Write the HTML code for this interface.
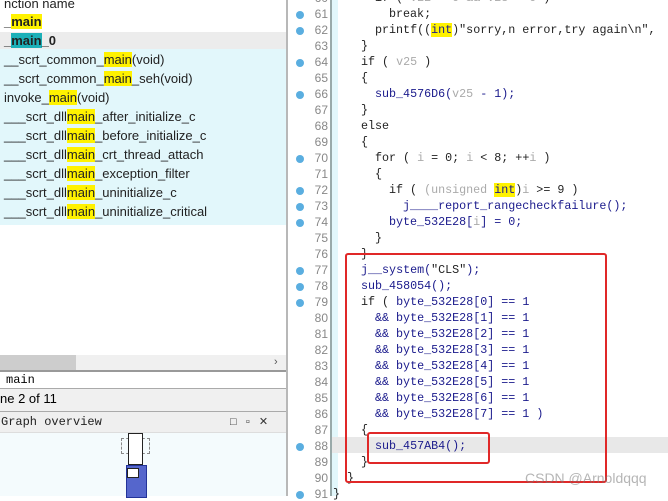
<!DOCTYPE html>
<html><head><style>
body{margin:0;width:668px;height:496px;overflow:hidden;background:#fff;position:relative;font-family:"Liberation Sans",sans-serif}
.l{position:absolute;left:0;top:0;width:286px;height:496px;background:#fff}
.row{position:absolute;left:4px;font-size:13px;color:#222;height:19px;line-height:19px;white-space:pre}
.h{background:#fff200}
.hc{background:#1cb0b8}
.code{position:absolute;left:0;top:0;font-family:"Liberation Mono",monospace;font-size:11.7px}
.ln{position:absolute;left:306px;width:22px;text-align:right;color:#888;font-size:12px;font-family:"Liberation Sans",sans-serif}
.dot{position:absolute;left:296px;width:8px;height:8px;border-radius:50%;background:#5aaee0}
.c{position:absolute;white-space:pre;color:#1a1a8c}
.k{color:#222}
.g{color:#aaa}
.y{background:#fff200}
</style></head><body>
<div class="l">
<div class="row" style="top:-6px">nction name</div>
<div style="position:absolute;left:0;top:32px;width:286px;height:17px;background:#ececec"></div>
<div style="position:absolute;left:0;top:49px;width:286px;height:176px;background:#e2f7fb"></div>
<div class="row" style="top:12px;font-weight:bold">_<span class="h">main</span></div>
<div class="row" style="top:31px;font-weight:bold">_<span class="hc">main</span>_0</div>
<div class="row" style="top:50px">__scrt_common_<span class="h">main</span>(void)</div>
<div class="row" style="top:69px">__scrt_common_<span class="h">main</span>_seh(void)</div>
<div class="row" style="top:88px">invoke_<span class="h">main</span>(void)</div>
<div class="row" style="top:107px">___scrt_dll<span class="h">main</span>_after_initialize_c</div>
<div class="row" style="top:126px">___scrt_dll<span class="h">main</span>_before_initialize_c</div>
<div class="row" style="top:145px">___scrt_dll<span class="h">main</span>_crt_thread_attach</div>
<div class="row" style="top:164px">___scrt_dll<span class="h">main</span>_exception_filter</div>
<div class="row" style="top:183px">___scrt_dll<span class="h">main</span>_uninitialize_c</div>
<div class="row" style="top:202px">___scrt_dll<span class="h">main</span>_uninitialize_critical</div>
<div style="position:absolute;left:0;top:355px;width:286px;height:15px;background:#f0f0f0"></div>
<div style="position:absolute;left:0;top:355px;width:76px;height:15px;background:#cdcdcd"></div>
<div style="position:absolute;left:274px;top:356px;font-size:11px;color:#555">›</div>
<div style="position:absolute;left:0;top:370px;width:286px;height:2px;background:#999"></div>
<div style="position:absolute;left:6px;top:373px;font-family:'Liberation Mono',monospace;font-size:12px">main</div>
<div style="position:absolute;left:0;top:388px;width:286px;height:22px;background:#f0f0f0;border-top:1px solid #aaa;border-bottom:1px solid #aaa"></div>
<div style="position:absolute;left:0;top:391px;font-size:13px">ne 2 of 11</div>
<div style="position:absolute;left:0;top:412px;width:286px;height:20px;background:#efefef;border-bottom:1px solid #ddd"></div>
<div style="position:absolute;left:1px;top:415px;font-family:'Liberation Mono',monospace;font-size:12px;color:#222">Graph overview</div>
<div style="position:absolute;left:230px;top:415px;font-size:11px;color:#333">□ &nbsp;&nbsp;▫ &nbsp;&nbsp;✕</div>
<div style="position:absolute;left:0;top:433px;width:286px;height:63px;background:#f4fbfd"></div>
<div style="position:absolute;left:121px;top:438px;width:27px;height:14px;border:1px dashed #888"></div>
<div style="position:absolute;left:128px;top:433px;width:13px;height:30px;border:1px solid #222;background:#fff"></div>
<div style="position:absolute;left:126px;top:465px;width:19px;height:31px;border:1px solid #223399;background:#5566cc"></div>
<div style="position:absolute;left:127px;top:468px;width:10px;height:8px;background:#fff;border:1px solid #222"></div>
</div>
<div style="position:absolute;left:286px;top:0;width:2px;height:496px;background:#b8b8b8"></div>
<div style="position:absolute;left:330px;top:0;width:2px;height:496px;background:#9aa"></div>
<div style="position:absolute;left:332px;top:0;width:6px;height:496px;background:#e2f7fb"></div>
<div style="position:absolute;left:332px;top:437px;width:336px;height:16px;background:#e8e8e8"></div>
<div class="code" id="code"></div>
<div style="position:absolute;left:345px;top:253px;width:258px;height:226px;border:2.5px solid #e02828;border-radius:3px"></div>
<div style="position:absolute;left:367px;top:432px;width:119px;height:28px;border:2.5px solid #e02828;border-radius:3px"></div>
<div style="position:absolute;left:525px;top:470px;font-size:14px;color:rgba(120,120,120,0.55)">CSDN @Arnoldqqq</div>
<script>
var L=[[60,0,'<span class="k">if ( </span><span class="g">v22 = 0 &amp;&amp; v23 = 0</span><span class="k"> )</span>',4],
[61,1,'<span class="k">break;</span>',6],[62,1,'<span class="k">printf((</span><span class="y">int</span><span class="k">)"sorry,n error,try again\\n",</span>',4],
[63,0,'<span class="k">}</span>',2],[64,1,'<span class="k">if ( </span><span class="g">v25</span><span class="k"> )</span>',2],[65,0,'<span class="k">{</span>',2],
[66,1,'sub_4576D6(<span class="g">v25</span> - 1);',4],[67,0,'<span class="k">}</span>',2],[68,0,'<span class="k">else</span>',2],[69,0,'<span class="k">{</span>',2],
[70,1,'<span class="k">for ( </span><span class="g">i</span><span class="k"> = 0; </span><span class="g">i</span><span class="k"> &lt; 8; ++</span><span class="g">i</span><span class="k"> )</span>',4],
[71,0,'<span class="k">{</span>',4],[72,1,'<span class="k">if ( </span><span class="g">(unsigned </span><span class="y">int</span><span class="k">)</span><span class="g">i</span><span class="k"> &gt;= 9 )</span>',6],
[73,1,'j____report_rangecheckfailure();',8],[74,1,'byte_532E28[<span class="g">i</span>] = 0;',6],[75,0,'<span class="k">}</span>',4],
[76,0,'<span class="k">}</span>',2],[77,1,'j__system(<span class="k">"CLS"</span>);',2],[78,1,'sub_458054();',2],[79,1,'<span class="k">if ( </span>byte_532E28[0] == 1',2]];
for(var i=1;i<8;i++)L.push([79+i,0,'&amp;&amp; byte_532E28['+i+'] == 1'+(i==7?' )':''),4]);
L.push([87,0,'<span class="k">{</span>',2],[88,1,'sub_457AB4();',4],[89,0,'<span class="k">}</span>',2],[90,0,'<span class="k">}</span>',0],[91,1,'<span class="k">}</span>',-2]);
var h='';L.forEach(function(r){var y=-9+(r[0]-60)*16;
h+='<div class="ln" style="top:'+y+'px">'+r[0]+'</div>';
if(r[1])h+='<div class="dot" style="top:'+(y+4)+'px"></div>';
h+='<div class="c" style="left:'+(347+r[3]*7)+'px;top:'+y+'px">'+r[2]+'</div>';});
document.getElementById('code').innerHTML=h;
</script>
</body></html>
